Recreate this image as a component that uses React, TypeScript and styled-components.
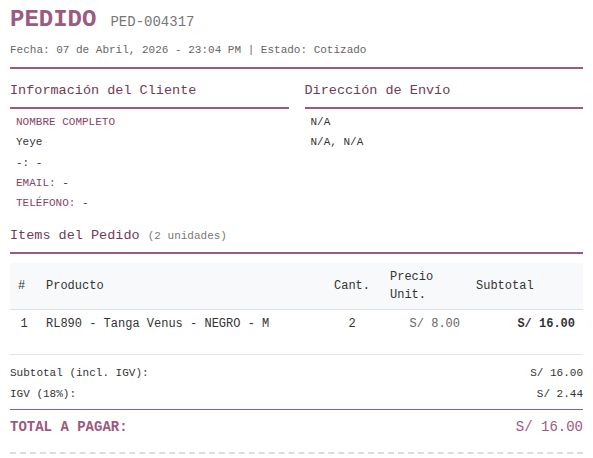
import styled, { createGlobalStyle } from 'styled-components';

const GlobalStyle = createGlobalStyle`
    body {
        margin: 0;
        background: #ffffff;
        font-family: 'Liberation Mono', 'Courier New', monospace;
        color: #333333;
    }
`;

const purple = '#9b5a80';
const darkPurple = '#6e3c58';

type Item = {
    id: number;
    name: string;
    qty: number;
    price: string;
    subtotal: string;
};

const items: Item[] = [
    { id: 1, name: 'RL890 - Tanga Venus - NEGRO - M', qty: 2, price: 'S/ 8.00', subtotal: 'S/ 16.00' },
];

const App = () => {
    return (
        <Page>
            <GlobalStyle />
            <Header>
                <TitleRow>
                    <Title>PEDIDO</Title>
                    <Code>PED-004317</Code>
                </TitleRow>
                <Meta>Fecha: 07 de Abril, 2026 - 23:04 PM | Estado: Cotizado</Meta>
            </Header>

            <Columns>
                <Column>
                    <SectionTitle>Información del Cliente</SectionTitle>
                    <InfoList>
                        <Label>NOMBRE COMPLETO</Label>
                        <Value>Yeye</Value>
                        <Value>-: -</Value>
                        <Value><Label as='span'>EMAIL:</Label> -</Value>
                        <Value><Label as='span'>TELÉFONO:</Label> -</Value>
                    </InfoList>
                </Column>
                <Column>
                    <SectionTitle>Dirección de Envío</SectionTitle>
                    <InfoList>
                        <Value>N/A</Value>
                        <Value>N/A, N/A</Value>
                    </InfoList>
                </Column>
            </Columns>

            <SectionTitle>
                Items del Pedido <Count>(2 unidades)</Count>
            </SectionTitle>

            <Table>
                <colgroup>
                    <col style={{ width: 28 }} />
                    <col />
                    <col style={{ width: 60 }} />
                    <col style={{ width: 86 }} />
                    <col style={{ width: 115 }} />
                </colgroup>
                <thead>
                    <tr>
                        <Th>#</Th>
                        <Th>Producto</Th>
                        <Th align='center'>Cant.</Th>
                        <Th>Precio Unit.</Th>
                        <Th>Subtotal</Th>
                    </tr>
                </thead>
                <tbody>
                    {items.map((item) => (
                        <tr key={item.id}>
                            <Td align='center'>{item.id}</Td>
                            <Td>{item.name}</Td>
                            <Td align='center'>{item.qty}</Td>
                            <Td align='right' $muted>{item.price}</Td>
                            <Td align='right' $bold>{item.subtotal}</Td>
                        </tr>
                    ))}
                </tbody>
            </Table>

            <Totals>
                <TotalRow>
                    <span>Subtotal (incl. IGV):</span>
                    <span>S/ 16.00</span>
                </TotalRow>
                <TotalRow>
                    <span>IGV (18%):</span>
                    <span>S/ 2.44</span>
                </TotalRow>
                <GrandTotal>
                    <span>TOTAL A PAGAR:</span>
                    <GrandAmount>S/ 16.00</GrandAmount>
                </GrandTotal>
            </Totals>
            <Footer />
        </Page>
    );
};

export default App;

const Page = styled.div`
    width: 573px;
    padding: 6px 10px 0;
`;

const Header = styled.header`
    padding-bottom: 11px;
    border-bottom: 2px solid ${purple};
`;

const TitleRow = styled.div`
    display: flex;
    align-items: baseline;
    gap: 14px;
`;

const Title = styled.h1`
    margin: 0;
    font-size: 24px;
    font-weight: bold;
    color: ${purple};
`;

const Code = styled.span`
    font-size: 14px;
    color: #777777;
`;

const Meta = styled.div`
    margin-top: 11px;
    font-size: 11px;
    color: #666666;
`;

const Columns = styled.div`
    display: grid;
    grid-template-columns: 1fr 1fr;
    column-gap: 16px;
    margin-top: 12px;
`;

const Column = styled.section``;

const SectionTitle = styled.h2`
    margin: 0;
    padding-bottom: 6px;
    border-bottom: 2px solid ${purple};
    font-size: 13.5px;
    font-weight: normal;
    color: ${darkPurple};
    line-height: 20px;
`;

const Count = styled.span`
    font-size: 11px;
    color: #777777;
`;

const InfoList = styled.div`
    display: flex;
    flex-direction: column;
    gap: 4.25px;
    padding: 5px 6px 15px;
`;

const Label = styled.div`
    font-size: 11px;
    line-height: 16px;
    color: #8a3f66;
    text-transform: uppercase;
`;

const Value = styled.div`
    font-size: 11px;
    line-height: 16px;
    color: #333333;
`;

const Table = styled.table`
    width: 100%;
    margin-top: 9px;
    border-collapse: collapse;
    table-layout: fixed;
    font-size: 12px;
`;

const Th = styled.th<{ align?: string }>`
    padding: 5px 8px;
    background: #f8f9fa;
    border-bottom: 1px solid #dee2e6;
    font-weight: normal;
    line-height: 18px;
    text-align: ${({ align }) => align || 'left'};
    color: #333333;
`;

const Td = styled.td<{ align?: string; $muted?: boolean; $bold?: boolean }>`
    padding: 6px 8px 8px;
    line-height: 16px;
    text-align: ${({ align }) => align || 'left'};
    color: ${({ $muted }) => ($muted ? '#666666' : '#333333')};
    font-weight: ${({ $bold }) => ($bold ? 'bold' : 'normal')};
`;

const Totals = styled.div`
    margin-top: 14px;
    padding-top: 10px;
    border-top: 1px solid #e5e5e5;
`;

const TotalRow = styled.div`
    display: flex;
    justify-content: space-between;
    font-size: 11px;
    line-height: 16px;
    margin-bottom: 5px;
`;

const GrandTotal = styled.div`
    display: flex;
    justify-content: space-between;
    align-items: baseline;
    margin-top: 7px;
    padding-top: 9px;
    border-top: 1px solid ${purple};
    font-size: 14px;
    font-weight: bold;
    color: ${purple};
`;

const GrandAmount = styled.span`
    font-size: 14px;
    font-weight: normal;
`;

const Footer = styled.div`
    margin-top: 17px;
    border-top: 2px dashed #dddddd;
`;
